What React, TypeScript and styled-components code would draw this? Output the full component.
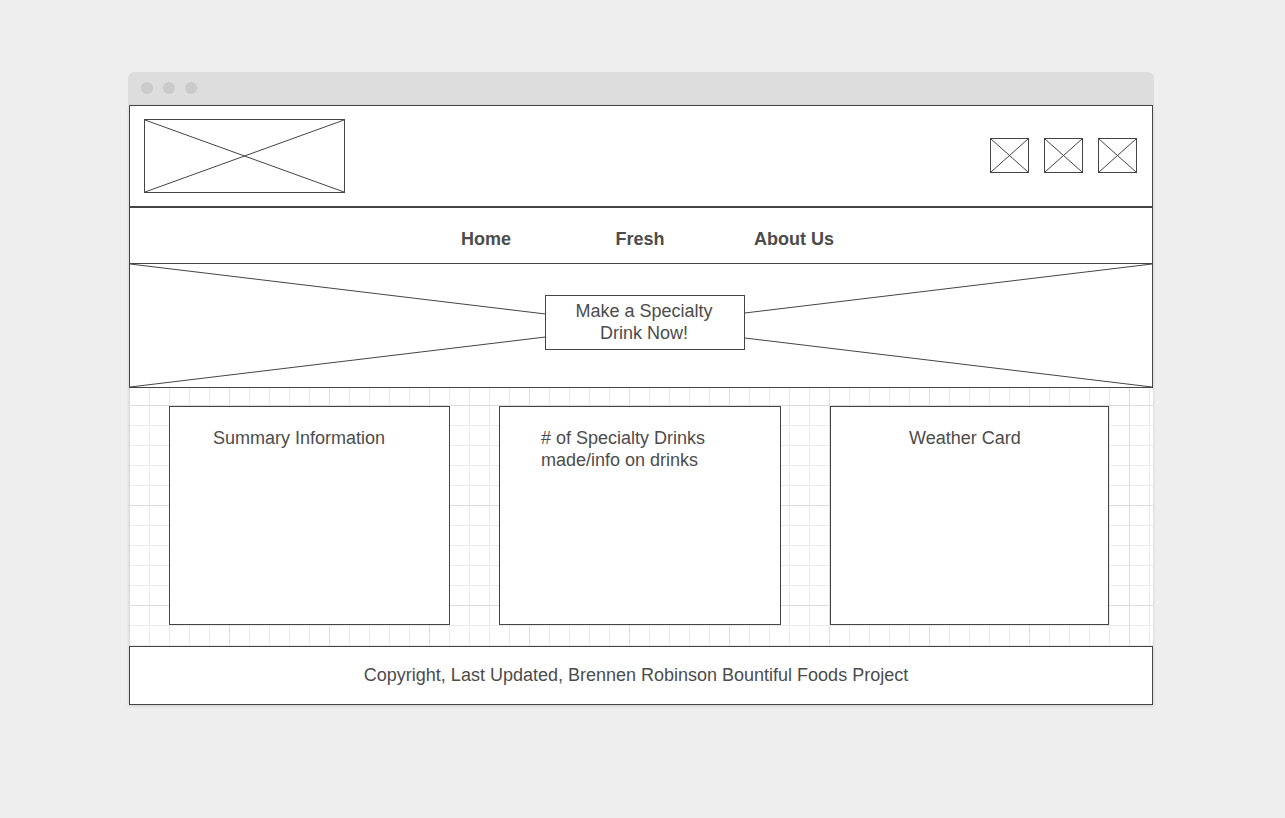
import React from 'react';
import styled, { createGlobalStyle } from 'styled-components';

const ink = '#444444';

const GlobalStyle = createGlobalStyle`
  * { box-sizing: border-box; }
  body {
    margin: 0;
    background: #eeeeee;
    color: #4c4c4c;
    font: 18px/22px "Liberation Sans", Arial, sans-serif;
  }
`;

const Page = styled.div`
  padding: 72px 131px 72px 128px;
`;

const TitleBar = styled.div`
  display: flex;
  align-items: center;
  gap: 10px;
  height: 33px;
  padding: 0 13px 1px;
  border-radius: 6px 6px 0 0;
  background: #dddddd;
`;

const Dot = styled.span`
  width: 12px;
  height: 12px;
  border-radius: 50%;
  background: #cacaca;
`;

const Canvas = styled.div`
  margin: 0 1px;
  background-color: #ffffff;
  background-image:
    linear-gradient(to right, #dddddd 1px, transparent 1px),
    linear-gradient(to bottom, #dddddd 1px, transparent 1px),
    linear-gradient(to right, #ebebeb 1px, transparent 1px),
    linear-gradient(to bottom, #ebebeb 1px, transparent 1px);
  background-size: 100px 100px, 100px 100px, 20px 20px, 20px 20px;
  box-shadow: 0 1px 3px rgba(0, 0, 0, 0.14);
`;

const Header = styled.header`
  display: flex;
  align-items: center;
  justify-content: space-between;
  padding: 13px 15px 13px 14px;
  border: 1px solid ${ink};
  background: #ffffff;
`;

const Frame = styled.svg<{ $width: number; $height: number }>`
  display: block;
  width: ${(p) => p.$width}px;
  height: ${(p) => p.$height}px;
  border: 1px solid ${ink};
`;

const Icons = styled.div`
  display: flex;
  gap: 15px;
  padding-bottom: 2px;
`;

const Nav = styled.nav`
  display: flex;
  justify-content: center;
  padding: 20px 2px 13px 0;
  border: 1px solid ${ink};
  background: #ffffff;
`;

const NavLink = styled.a`
  width: 154px;
  color: inherit;
  font-weight: bold;
  text-align: center;
  text-decoration: none;
`;

const Hero = styled.section`
  position: relative;
  display: flex;
  justify-content: center;
  padding: 31px 0 37px 8px;
  border: 1px solid ${ink};
  border-top: 0;
  background: #ffffff;
`;

const HeroImage = styled.svg`
  position: absolute;
  inset: 0;
  width: 100%;
  height: 100%;
`;

const CallToAction = styled.button`
  position: relative;
  width: 200px;
  padding: 4px 24px 5px 22px;
  border: 1px solid ${ink};
  border-radius: 0;
  background: #ffffff;
  color: inherit;
  font: inherit;
  text-align: center;
`;

const Cards = styled.main`
  display: grid;
  grid-template-columns: 281fr 282fr 279fr;
  gap: 49px;
  padding: 18px 44px 21px 40px;
`;

const Card = styled.section<{ $indent: number }>`
  min-height: 219px;
  padding: 20px 40px 20px ${(p) => p.$indent}px;
  border: 1px solid ${ink};
  background: #ffffff;
`;

const CardTitle = styled.h2`
  margin: 0;
  font: inherit;
`;

const Footer = styled.footer`
  padding: 17px 10px 18px 0;
  border: 1px solid ${ink};
  background: #ffffff;
  text-align: center;
`;

const Diagonals = () => (
  <g stroke={ink} strokeWidth="1">
    <line x1="0" y1="0" x2="100%" y2="100%" />
    <line x1="0" y1="100%" x2="100%" y2="0" />
  </g>
);

const links = ['Home', 'Fresh', 'About Us'];
const cards = [
  { title: 'Summary Information', indent: 43 },
  { title: '# of Specialty Drinks made/info on drinks', indent: 41 },
  { title: 'Weather Card', indent: 78 },
];

export default function App() {
  return (
    <>
      <GlobalStyle />
      <Page>
        <TitleBar>
          <Dot />
          <Dot />
          <Dot />
        </TitleBar>
        <Canvas>
          <Header>
            <Frame $width={201} $height={74} role="img" aria-label="Logo">
              <Diagonals />
            </Frame>
            <Icons>
              {[1, 2, 3].map((n) => (
                <Frame key={n} $width={39} $height={35} role="img" aria-label={`Social icon ${n}`}>
                  <Diagonals />
                </Frame>
              ))}
            </Icons>
          </Header>
          <Nav>
            {links.map((label) => (
              <NavLink key={label} href="#">{label}</NavLink>
            ))}
          </Nav>
          <Hero>
            <HeroImage aria-hidden="true">
              <Diagonals />
            </HeroImage>
            <CallToAction type="button">Make a Specialty Drink Now!</CallToAction>
          </Hero>
          <Cards>
            {cards.map((card) => (
              <Card key={card.title} $indent={card.indent}>
                <CardTitle>{card.title}</CardTitle>
              </Card>
            ))}
          </Cards>
          <Footer>Copyright, Last Updated, Brennen Robinson Bountiful Foods Project</Footer>
        </Canvas>
      </Page>
    </>
  );
}
